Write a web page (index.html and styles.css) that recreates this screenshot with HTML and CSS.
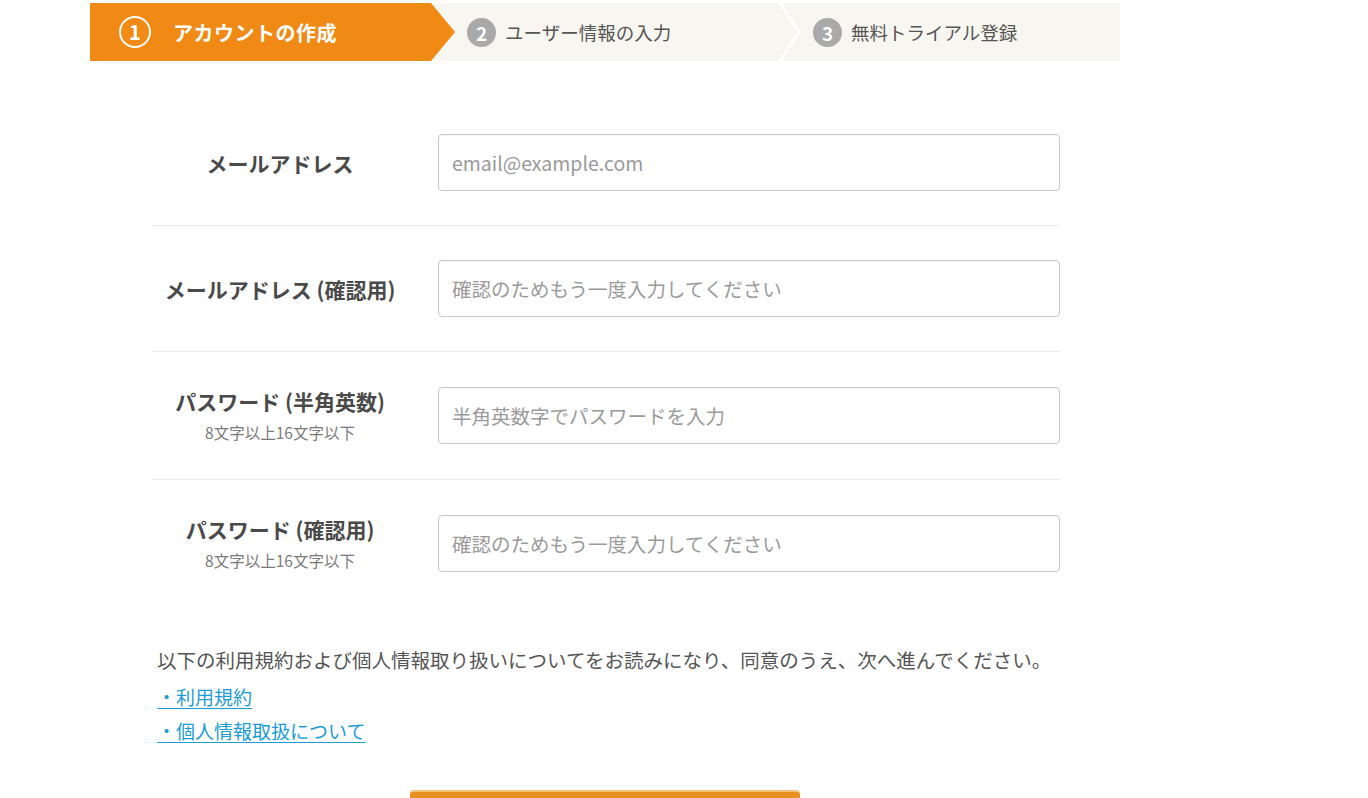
FILE: index.html
```html
<!DOCTYPE html>
<html lang="ja">
<head>
<meta charset="utf-8">
<title>アカウントの作成</title>
<link rel="stylesheet" href="styles.css">
</head>
<body>
<div class="steps">
  <div class="step step-active">
    <span class="badge badge-outline">1</span>
    <span class="step-label">アカウントの作成</span>
    <svg class="arrow" width="24" height="58" viewBox="0 0 24 58"><polygon points="0,0 24,29 0,58" fill="#f08a14"/></svg>
  </div>
  <div class="step step-2">
    <span class="badge">2</span>
    <span class="step-label">ユーザー情報の入力</span>
  </div>
  <svg class="sep" width="24" height="58" viewBox="0 0 24 58"><polyline points="2,0 21,29 2,58" fill="none" stroke="#ffffff" stroke-width="3"/></svg>
  <div class="step step-3">
    <span class="badge">3</span>
    <span class="step-label">無料トライアル登録</span>
  </div>
</div>

<form class="form">
  <div class="row">
    <div class="label"><div class="title">メールアドレス</div></div>
    <input class="field" type="text" placeholder="email@example.com">
  </div>
  <div class="row">
    <div class="label"><div class="title">メールアドレス (確認用)</div></div>
    <input class="field" type="text" placeholder="確認のためもう一度入力してください">
  </div>
  <div class="row">
    <div class="label"><div class="title">パスワード (半角英数)</div><div class="sub">8文字以上16文字以下</div></div>
    <input class="field" type="text" placeholder="半角英数字でパスワードを入力">
  </div>
  <div class="row row-last">
    <div class="label"><div class="title">パスワード (確認用)</div><div class="sub">8文字以上16文字以下</div></div>
    <input class="field" type="text" placeholder="確認のためもう一度入力してください">
  </div>

  <div class="terms">
    <p class="note">以下の利用規約および個人情報取り扱いについてをお読みになり、同意のうえ、次へ進んでください。</p>
    <a class="link link-first" href="#">・利用規約</a>
    <a class="link" href="#">・個人情報取扱について</a>
  </div>

  <div class="actions">
    <button class="next" type="button" aria-label="次へ進む"></button>
  </div>
</form>
</body>
</html>
```

FILE: styles.css
```css
html, body {
  margin: 0;
  padding: 0;
  background: #ffffff;
}
body {
  font-family: "Noto Sans CJK JP", "Noto Sans", sans-serif;
  color: #444;
  overflow: hidden;
}

.steps {
  display: flex;
  margin: 3px 0 0 90px;
  width: 1030px;
  height: 58px;
  background: #f8f6f1;
}
.step {
  display: flex;
  align-items: center;
  height: 58px;
  position: relative;
}
.step-active {
  background: #f08a14;
  width: 341px;
  padding-left: 29px;
  box-sizing: border-box;
}
.arrow {
  position: absolute;
  right: -24px;
  top: 0;
}
.step-2 {
  padding-left: 36px;
  width: 347px;
  box-sizing: border-box;
}
.sep {
  display: block;
  flex: none;
}
.step-3 {
  padding-left: 11px;
}
.badge {
  display: flex;
  align-items: center;
  justify-content: center;
  width: 29px;
  height: 29px;
  border-radius: 50%;
  background: #a9a9a9;
  color: #ffffff;
  font-weight: bold;
  font-size: 19px;
  line-height: 1;
  margin-right: 9px;
}
.badge-outline {
  width: 28px;
  height: 28px;
  background: transparent;
  border: 2.5px solid #ffffff;
  margin-right: 22px;
  font-size: 20px;
}
.step-label {
  font-size: 18.5px;
  color: #555;
}
.step-active .step-label {
  color: #ffffff;
  font-weight: bold;
  font-size: 20px;
  letter-spacing: 0.5px;
}

.form {
  margin: 0 0 0 152px;
  width: 908px;
  padding-top: 39px;
}
.row {
  display: flex;
  align-items: center;
  padding: 34px 0;
  border-bottom: 1px solid #ebebeb;
}
.row-last {
  border-bottom: none;
}
.label {
  width: 256px;
  text-align: center;
  margin-right: 30px;
  flex: none;
}
.title {
  font-size: 21px;
  font-weight: bold;
  line-height: 30px;
  color: #4a4a4a;
}
.sub {
  font-size: 15.5px;
  line-height: 26px;
  margin-top: 3px;
  color: #7a7a7a;
}
.field {
  box-sizing: border-box;
  width: 622px;
  height: 57px;
  border: 1px solid #c8c8c8;
  border-radius: 4px;
  padding: 0 13px;
  font-family: "Noto Sans CJK JP", "Open Sans", sans-serif;
  font-size: 19.5px;
  color: #444;
  box-shadow: inset 0 1px 1px rgba(0,0,0,0.04);
  outline: none;
}
.field::placeholder {
  color: #9a9a9a;
}

.terms {
  padding-left: 5px;
  margin-top: 36px;
}
.note {
  margin: 0;
  font-size: 19.5px;
  line-height: 34px;
  color: #555;
}
.link {
  display: block;
  width: max-content;
  font-size: 19px;
  line-height: 34px;
  color: #1b9bd7;
  text-decoration: underline;
  text-underline-offset: 3px;
}
.link-first {
  margin-top: 3px;
}

.actions {
  margin-top: 42px;
  padding-left: 258px;
}
.next {
  display: block;
  width: 390px;
  height: 60px;
  border: none;
  border-top: 2px solid #f5c07a;
  border-radius: 4px;
  background: #e8901f;
}
```
